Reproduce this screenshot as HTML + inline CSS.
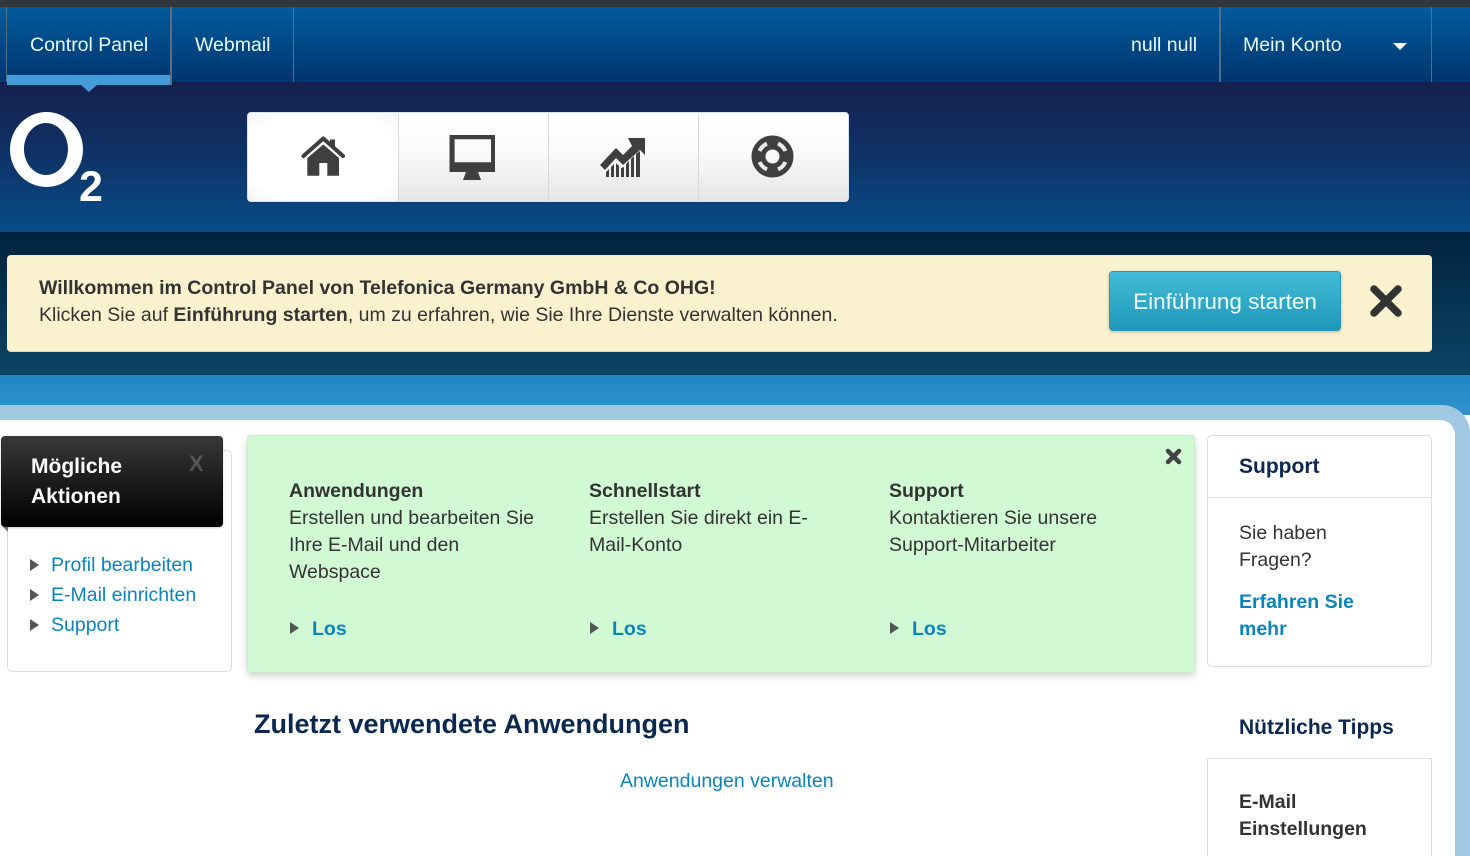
<!DOCTYPE html>
<html lang="de"><head><meta charset="utf-8"><title>Control Panel</title>
<style>
*{box-sizing:border-box}
html,body{margin:0;padding:0;width:1470px;height:856px;overflow:hidden;background:#fff}
body{position:relative;font-family:"Liberation Sans",Arial,sans-serif;font-size:19.5px;color:#333}
.a{position:absolute;white-space:nowrap}
a{text-decoration:none;color:#0b84bd}
b{font-weight:bold}
.nt{color:#eafcff;line-height:24px;top:33px}
.sep{position:absolute;top:7px;height:75px;width:1px;background:#4f6f8f}
.tab{position:absolute;top:1px;height:88px;width:150px;background:linear-gradient(#fff 0%,#fbfbfb 40%,#e6e6e6 100%);border-left:1px solid #d8d8d8}
.tri{position:absolute;width:0;height:0;border-left:9px solid #555;border-top:6px solid transparent;border-bottom:6px solid transparent}
.t{line-height:27px}
.ic{filter:blur(.35px)}
</style></head><body>
<div class="a" style="left:0;top:0;width:1470px;height:7px;background:#333539"></div>
<div class="a" style="left:0;top:7px;width:1470px;height:75px;background:linear-gradient(#005b9c,#00356f)"></div>
<div class="a" style="left:0;top:82px;width:1470px;height:150px;background:linear-gradient(#15204e 0%,#0f3163 45%,#074c88 100%)"></div>
<div class="a" style="left:0;top:232px;width:1470px;height:143px;background:linear-gradient(#00223f,#0d4464)"></div>
<div class="a" style="left:0;top:375px;width:1470px;height:40px;background:linear-gradient(#2087c3,#3191cc)"></div>
<div class="a" style="left:0;top:405px;width:1470px;height:451px;background:#a0c8e2;border-top-right-radius:28px"></div>
<div class="a" style="left:0;top:420px;width:1455px;height:436px;background:#fff;border-top-right-radius:15px"></div>

<div class="sep" style="left:6px"></div><div class="sep" style="left:170px;width:2px;height:78px;background:#5a6f85"></div><div class="sep" style="left:293px"></div><div class="sep" style="left:1219px;width:2px"></div><div class="sep" style="left:1431px"></div>
<div class="a" style="left:7px;top:75px;width:163px;height:10px;background:#449bd8"></div>
<div class="a" style="left:81px;top:85px;width:0;height:0;border-left:8px solid transparent;border-right:8px solid transparent;border-top:7px solid #449bd8"></div>
<div class="a nt" style="left:30px">Control Panel</div>
<div class="a nt" style="left:195px">Webmail</div>
<div class="a nt" style="left:1131px">null null</div>
<div class="a nt" style="left:1243px">Mein Konto</div>
<div class="a" style="left:1393px;top:43px;width:0;height:0;border-left:7.5px solid transparent;border-right:7.5px solid transparent;border-top:7px solid #fff"></div>

<svg class="a ic" style="left:8px;top:110px" width="96" height="96" viewBox="0 0 96 96">
<path fill-rule="evenodd" fill="#fff" d="M2 39.500 a36.500 37.500 0 1 0 73 0 a36.500 37.500 0 1 0 -73 0Z M16 39 a22 26 0 1 0 44 0 a22 26 0 1 0 -44 0Z"/>
<text x="71" y="91" font-family="Liberation Sans" font-weight="bold" font-size="43" fill="#fff">2</text></svg>

<div class="a" style="left:247px;top:112px;width:602px;height:90px;background:#fff;border:1px solid #d5e2f2;border-radius:4px;overflow:hidden">
<div class="tab" style="left:0;border-left:0;background:radial-gradient(ellipse at center,#fff 75%,#f4f4f4 100%)"></div>
<div class="tab" style="left:150px"></div><div class="tab" style="left:300px"></div><div class="tab" style="left:450px;width:152px"></div>
</div>
<svg class="a ic" style="left:300px;top:134px" width="46" height="46" viewBox="0 0 46 46">
<path d="M3.500 22 L23.300 4.500 L43 22" fill="none" stroke="#3f3f3f" stroke-width="4" stroke-linecap="round" stroke-linejoin="round"/>
<path d="M30 5.500 H35 V14 L30 10Z" fill="#3f3f3f"/>
<path fill-rule="evenodd" fill="#3f3f3f" d="M7.300 24 L23.300 10.500 L39 24 V41.700 H7.300Z M19.300 29 V41.700 H27.300 V29Z"/></svg>
<svg class="a ic" style="left:448px;top:134px" width="50" height="48" viewBox="0 0 50 48">
<path fill-rule="evenodd" fill="#3f3f3f" d="M1.500 1 H47 V38 H1.500Z M6.600 5.300 V28.300 H43 V5.300Z"/>
<path d="M18 38 H30 L33 46 H15Z" fill="#3f3f3f"/></svg>
<svg class="a ic" style="left:598px;top:134px" width="50" height="46" viewBox="0 0 50 46">
<path d="M2 31 L18 14 L25 21 L34 12 L30 4 H47 V21 L42 16 L25 31 L18 24 L7 36Z" fill="#3f3f3f"/>
<path d="M8 43 V38 L11 35 V43Z M13 43 V33 L16 30 V43Z M18 43 V29 L21 32 V43Z M23 43 V34 L26 33 V43Z M28 43 V30 L31 27 V43Z M33 43 V25 L36 22 V43Z M38 43 V20 L42 17 V43Z" fill="#3f3f3f"/></svg>
<svg class="a ic" style="left:750px;top:134px" width="46" height="46" viewBox="0 0 46 46">
<circle cx="22.500" cy="22.500" r="14" fill="none" stroke="#3f3f3f" stroke-width="14"/>
<path d="M35.400 28 A14 14 0 0 1 28 35.400 M17 35.400 A14 14 0 0 1 9.600 28 M9.600 17 A14 14 0 0 1 17 9.600 M28 9.600 A14 14 0 0 1 35.400 17" fill="none" stroke="#eee" stroke-width="4"/></svg>

<div class="a" style="left:7px;top:255px;width:1425px;height:97px;background:#faf2cf;border-radius:4px;border-bottom:1px solid #e3dcae"></div>
<div class="a t" style="left:39px;top:275px"><b>Willkommen im Control Panel von Telefonica Germany GmbH &amp; Co OHG!</b></div>
<div class="a t" style="left:39px;top:302px">Klicken Sie auf <b>Einführung starten</b>, um zu erfahren, wie Sie Ihre Dienste verwalten können.</div>
<div class="a" style="left:1109px;top:271px;width:232px;height:60px;border-radius:4px;background:linear-gradient(#43bcd8,#1f97b8);border:1px solid #2a97b5;box-shadow:0 1px 3px rgba(0,0,0,.25);color:#f0fdff;font-size:22.500px;line-height:60px;text-align:center">Einführung starten</div>
<svg class="a" style="left:1369px;top:284px" width="34" height="34" viewBox="0 0 34 34"><path d="M5 5 L29 29 M29 5 L5 29" stroke="#333" stroke-width="7.500" stroke-linecap="round"/></svg>

<div class="a" style="left:7px;top:450px;width:225px;height:222px;border:1px solid #ddd;border-radius:5px"></div>
<div class="a" style="left:1px;top:436px;width:222px;height:91px;border-radius:4px;background:linear-gradient(#383838,#000);box-shadow:0 1px 2px rgba(0,0,0,.2)"></div>
<div class="a" style="left:31px;top:452px;color:#fff;font-weight:bold;font-size:21px;line-height:30px">Mögliche<br>Aktionen</div>
<div class="a" style="left:189px;top:452px;color:#555;font-weight:bold;font-size:22px;line-height:24px">X</div>
<div class="a" style="left:3px;top:527px;width:0;height:0;border-top:5px solid #777;border-left:5px solid transparent"></div>
<div class="tri" style="left:30px;top:559px"></div><a class="a" style="left:51px;top:553px;line-height:24px" href="#">Profil bearbeiten</a>
<div class="tri" style="left:30px;top:589px"></div><a class="a" style="left:51px;top:583px;line-height:24px" href="#">E-Mail einrichten</a>
<div class="tri" style="left:30px;top:619px"></div><a class="a" style="left:51px;top:613px;line-height:24px" href="#">Support</a>

<div class="a" style="left:247px;top:435px;width:948px;height:238px;background:#d1f9d4;border-radius:4px;border:1px solid #c8ecca;box-shadow:0 3px 8px rgba(0,0,0,.18)"></div>
<svg class="a" style="left:1164px;top:447px" width="19" height="19" viewBox="0 0 19 19"><path d="M4 4 L15 15 M15 4 L4 15" stroke="#444" stroke-width="4.500" stroke-linecap="round"/></svg>
<div class="a t" style="left:289px;top:478px"><b>Anwendungen</b><br>Erstellen und bearbeiten Sie<br>Ihre E-Mail und den<br>Webspace</div>
<div class="a t" style="left:589px;top:478px"><b>Schnellstart</b><br>Erstellen Sie direkt ein E-<br>Mail-Konto</div>
<div class="a t" style="left:889px;top:478px"><b>Support</b><br>Kontaktieren Sie unsere<br>Support-Mitarbeiter</div>
<div class="tri" style="left:290px;top:622px"></div><a class="a" style="left:312px;top:617px;line-height:24px;font-weight:bold" href="#">Los</a>
<div class="tri" style="left:590px;top:622px"></div><a class="a" style="left:612px;top:617px;line-height:24px;font-weight:bold" href="#">Los</a>
<div class="tri" style="left:890px;top:622px"></div><a class="a" style="left:912px;top:617px;line-height:24px;font-weight:bold" href="#">Los</a>

<div class="a" style="left:254px;top:708px;font-size:27px;font-weight:bold;color:#0a2850;line-height:32px">Zuletzt verwendete Anwendungen</div>
<a class="a" style="left:620px;top:769px;line-height:24px" href="#">Anwendungen verwalten</a>

<div class="a" style="left:1207px;top:435px;width:225px;height:232px;border:1px solid #ddd;border-radius:5px"></div>
<div class="a" style="left:1208px;top:497px;width:223px;height:1px;background:#ddd"></div>
<div class="a" style="left:1239px;top:455px;font-weight:bold;color:#0a2850;line-height:24px;font-size:21px">Support</div>
<div class="a t" style="left:1239px;top:520px">Sie haben<br>Fragen?</div>
<a class="a t" style="left:1239px;top:589px;font-weight:bold" href="#">Erfahren Sie<br>mehr</a>
<div class="a" style="left:1207px;top:758px;width:225px;height:98px;border-left:1px solid #ddd;border-right:1px solid #ddd;border-top:1px solid #ddd"></div>
<div class="a" style="left:1239px;top:716px;font-weight:bold;color:#0a2850;line-height:24px;font-size:21px">Nützliche Tipps</div>
<div class="a t" style="left:1239px;top:789px;font-weight:bold">E-Mail<br>Einstellungen</div>
</body></html>
